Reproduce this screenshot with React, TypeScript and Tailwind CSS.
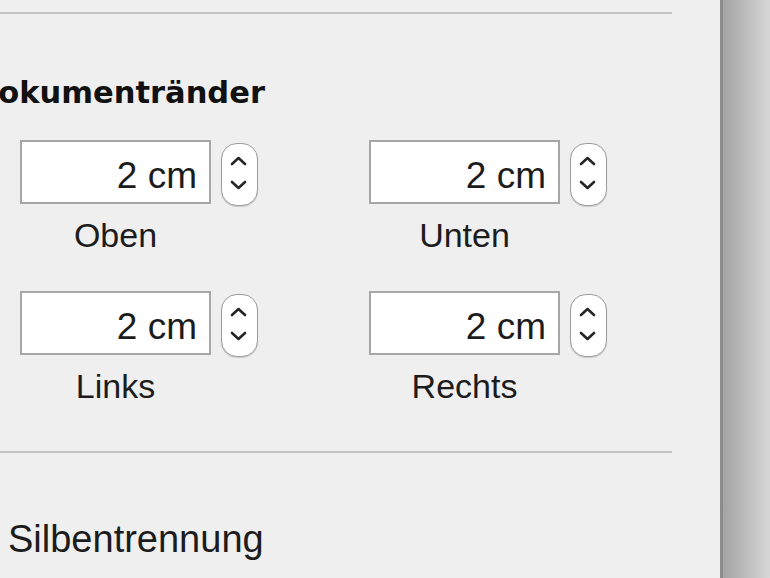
function Stepper() {
  return (
    <div className="mt-[3px] ml-[10px] h-[63px] w-[37px] shrink-0 rounded-[16px] border-[1.5px] border-[#9c9c9c] bg-white shadow-[0_1px_1px_rgba(0,0,0,0.15)]">
      <svg width="34" height="60" viewBox="0 0 34 60" fill="none">
        <path d="M10 20 L16.5 14 L23 20" stroke="#262626" strokeWidth="2.6" strokeLinecap="round" strokeLinejoin="round" />
        <path d="M10 38 L16.5 44 L23 38" stroke="#262626" strokeWidth="2.6" strokeLinecap="round" strokeLinejoin="round" />
      </svg>
    </div>
  )
}

function MarginField({ label }: { label: string }) {
  return (
    <div className="flex w-[238px] flex-col">
      <div className="flex items-start">
        <div className="flex h-[64px] w-[191px] shrink-0 justify-end border-2 border-[#a6a6a6] bg-white pt-[12px] pr-[12px] text-[37px] leading-[44px] text-[#1c1c1c]">
          2 cm
        </div>
        <Stepper />
      </div>
      <div className="mt-[9px] w-[191px] text-center text-[34px] leading-[40px] text-[#1c1c1c]">{label}</div>
    </div>
  )
}

export default function App() {
  return (
    <div className="flex h-[578px] w-[770px] overflow-hidden font-['Liberation_Sans',Arial,sans-serif]">
      <div className="flex w-[720px] shrink-0 flex-col overflow-hidden bg-[#efefef]">
        <div className="mt-[12px] h-[2px] w-[672px] bg-[#c4c4c4]" />
        <div className="mt-[58px] -ml-[27px] h-[41px] whitespace-nowrap font-['DejaVu_Sans',sans-serif] text-[30.5px] leading-[41px] font-bold text-[#111]">
          Dokumentränder
        </div>

        <div className="mt-[27px] flex gap-[111px] pl-[20px]">
          <MarginField label="Oben" />
          <MarginField label="Unten" />
        </div>
        <div className="mt-[36px] flex gap-[111px] pl-[20px]">
          <MarginField label="Links" />
          <MarginField label="Rechts" />
        </div>

        <div className="mt-[45px] h-[2px] w-[672px] bg-[#c4c4c4]" />
        <div className="mt-[64px] pl-[8px] text-[38px] leading-[44px] text-[#1c1c1c]">Silbentrennung</div>
      </div>
      <div className="w-[3px] shrink-0 bg-[#8c8c8c]" />
      <div className="flex-1 bg-gradient-to-r from-[#a3a3a3] to-[#d8d8d8]" />
    </div>
  )
}
